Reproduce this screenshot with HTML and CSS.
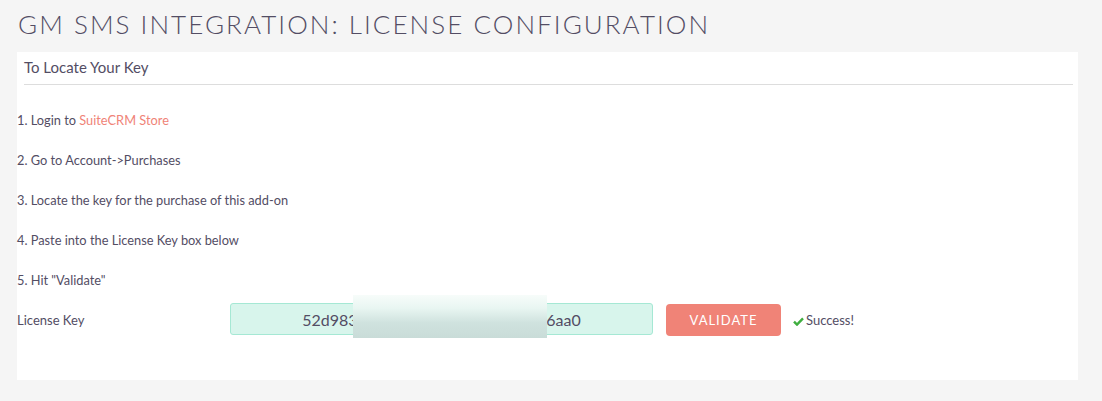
FILE: index.html
```html
<!DOCTYPE html>
<html lang="en">
<head>
    <meta charset="UTF-8">
    <title>GM SMS Integration: License Configuration</title>
    <link rel="stylesheet" href="styles.css">
</head>
<body>
    <h2 class="page-title">GM SMS Integration: License Configuration</h2>
    <div class="panel">
        <div class="panel-heading">To Locate Your Key</div>
        <div class="steps">
            <div class="step">1. Login to <a href="#">SuiteCRM Store</a></div>
            <div class="step">2. Go to Account-&gt;Purchases</div>
            <div class="step">3. Locate the key for the purchase of this add-on</div>
            <div class="step">4. Paste into the License Key box below</div>
            <div class="step">5. Hit "Validate"</div>
        </div>
        <div class="license-row">
            <label class="license-label" for="licenseKey">License Key</label>
            <div class="key-wrap">
                <input type="text" id="licenseKey" class="key-input" value="52d983e1f7c04b2a9d8e0c5b1f3e6aa0">
                <div class="redact"></div>
            </div>
            <button class="btn-validate">Validate</button>
            <span class="status">
                <svg class="check" width="11" height="9" viewBox="0 0 11 9"><path d="M1 4.6 L4 7.6 L10 1.4" fill="none" stroke="#3fae3f" stroke-width="2.4"/></svg>Success!
            </span>
        </div>
    </div>
</body>
</html>
```

FILE: styles.css
```css
body { margin: 0; background: #f5f5f5; font-family: Lato, "Open Sans", sans-serif; color: #534d64; }
.page-title { margin: 0; padding: 8px 0 0 18px; height: 44px; font-size: 26px; font-weight: 300; letter-spacing: 2.05px; text-transform: uppercase; line-height: 32px; }
.panel { margin: 0 24px 0 17px; background: #fff; padding-bottom: 40px; }
.panel-heading { margin: 0 5px 0 7px; height: 32px; line-height: 30px; font-size: 15px; border-bottom: 1px solid #ddd; }
.steps { padding-top: 15px; }
.step { height: 40px; line-height: 41px; font-size: 12.8px; }
.step a { color: #f08377; text-decoration: none; }
.license-row { display: flex; align-items: center; height: 40px; font-size: 13px; }
.license-label { width: 213px; }
.key-wrap { position: relative; }
.key-input { box-sizing: border-box; width: 423px; height: 32px; margin-top: -2px; border: 1px solid #a5e8d4; border-radius: 3px; background: #d8f5ec; text-align: center; font-family: Lato, sans-serif; font-size: 16px; color: #534d64; }
.redact { position: absolute; left: 123px; top: -10px; width: 194px; height: 43px; background: linear-gradient(to bottom, #f7fcfa 0%, #e9f6f2 30%, #cfe2de 65%, #c9dcd8 100%); }
.btn-validate { margin-left: 13px; width: 115px; height: 32px; border: none; border-radius: 4px; background: #f08377; color: #fff; font-family: Lato, sans-serif; font-size: 13px; letter-spacing: 1px; text-transform: uppercase; }
.status { margin-left: 12px; display: flex; align-items: center; }
.check { margin-right: 2px; margin-top: 2px; }
```
